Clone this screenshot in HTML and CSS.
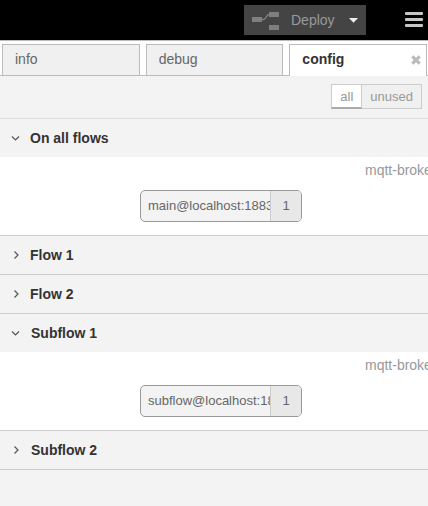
FILE: index.html
```html
<!DOCTYPE html>
<html lang="en">
<head>
<meta charset="utf-8">
<title>Config</title>
<link rel="stylesheet" href="styles.css">
</head>
<body>
<header class="header">
  <button class="deploy">
    <svg class="deploy-icon" width="28" height="18" viewBox="0 0 28 18"><path d="M10 7.5h1.500c3 0 2.500-5 5.500-5H18" fill="none" stroke="#7f7f7f" stroke-width="1.5"/><path d="M0 5h10v5H0zM17 0h10v5H17zM17 13h10v5H17z" fill="#7f7f7f"/></svg>
    <span class="deploy-label">Deploy</span>
    <svg width="9" height="5" viewBox="0 0 9 5"><path d="M0 0h9L4.500 4.800z" fill="#eee"/></svg>
  </button>
  <div class="menu"><i></i><i></i><i></i></div>
</header>
<nav class="tabs">
  <a class="tab">info</a>
  <a class="tab">debug</a>
  <a class="tab active">config<svg class="close" width="10" height="10" viewBox="0 0 10 10"><path d="M1.300 1.300l7.400 7.400M8.700 1.300l-7.400 7.400" stroke="#bbb" stroke-width="3.200"/></svg></a>
</nav>
<div class="toolbar"><a class="filter selected">all</a><a class="filter">unused</a></div>
<main>
  <section class="category">
    <h2><svg class="chevron" width="12" height="12" viewBox="0 0 12 12"><path d="M2 4.500L5.500 8 9 4.500"/></svg>On all flows</h2>
    <div class="content">
      <div class="type">mqtt-broker</div>
      <div class="node"><span class="label">main@localhost:1883</span><span class="count">1</span></div>
    </div>
  </section>
  <section class="category"><h2><svg class="chevron" width="12" height="12" viewBox="0 0 12 12"><path d="M4.500 2.500L8 6l-3.500 3.500"/></svg>Flow 1</h2></section>
  <section class="category"><h2><svg class="chevron" width="12" height="12" viewBox="0 0 12 12"><path d="M4.500 2.500L8 6l-3.500 3.500"/></svg>Flow 2</h2></section>
  <section class="category subflow">
    <h2><svg class="chevron" width="12" height="12" viewBox="0 0 12 12"><path d="M2 4.500L5.500 8 9 4.500"/></svg>Subflow 1</h2>
    <div class="content">
      <div class="type">mqtt-broker</div>
      <div class="node"><span class="label">subflow@localhost:1883</span><span class="count">1</span></div>
    </div>
  </section>
  <section class="category subflow"><h2><svg class="chevron" width="12" height="12" viewBox="0 0 12 12"><path d="M4.500 2.500L8 6l-3.500 3.500"/></svg>Subflow 2</h2></section>
</main>
</body>
</html>
```
FILE: styles.css
```css
* { box-sizing: border-box; }
body {
  margin: 0;
  height: 506px;
  overflow: hidden;
  background: #f3f3f3;
  font: 14px/20px "Liberation Sans", Arial, sans-serif;
  color: #666;
}
svg { display: block; flex: none; }
.header {
  height: 41px;
  padding: 5px 5px 5px 244px;
  background: #000;
  border-bottom: 1px solid #bbb;
  display: flex;
  justify-content: space-between;
}
.deploy {
  width: 122px;
  height: 30px;
  padding: 0 7px 0 8px;
  border: 0;
  background: #444;
  color: #999;
  font: inherit;
  display: flex;
  align-items: center;
}
.deploy-icon { margin-top: 1px; }
.deploy-label { width: 43px; margin: 0 15px 0 11px; }
.menu { width: 18px; padding-top: 7px; }
.menu i { display: block; height: 3px; margin-bottom: 3px; background: #c7c7c7; border-radius: 1px; }
.tabs {
  height: 35px;
  padding: 3px 1px 0 2px;
  background: linear-gradient(#bbb, #bbb) bottom / 100% 1px no-repeat #fff;
  display: flex;
  gap: 6px;
}
.tab {
  flex: 1;
  height: 32px;
  padding: 0 5px 0 12px;
  border: 1px solid #bbb;
  background: #f0f0f0;
  line-height: 29px;
}
.tab.active {
  display: flex;
  align-items: center;
  justify-content: space-between;
  padding-bottom: 2px;
  border-bottom: 0;
  background: #fff;
  color: #333;
  font-weight: bold;
}
.toolbar {
  height: 43px;
  padding: 8px 6px 0 0;
  border-bottom: 1px solid #ddd;
  display: flex;
  justify-content: flex-end;
}
.filter {
  height: 25px;
  padding: 0 8px;
  border: 1px solid #ccc;
  background: #f0f0f0;
  color: #999;
  font-size: 13px;
  line-height: 24px;
}
.filter + .filter { border-left: 0; }
.filter.selected { width: 31px; background: #fff; border-bottom: 2px solid #aaa; }
.category { border-bottom: 1px solid #ccc; }
h2 {
  height: 38px;
  margin: 0;
  padding-left: 10px;
  display: flex;
  align-items: center;
  gap: 8px;
  color: #333;
  font-size: 14px;
  line-height: 20px;
}
.subflow h2 { gap: 9px; }
.chevron { fill: none; stroke: #555; stroke-width: 1.2; }
.content {
  height: 78px;
  padding-top: 3px;
  background: #fff;
  overflow: hidden;
}
.type { padding-left: 365px; color: #999; white-space: nowrap; }
.node {
  width: 162px;
  height: 32px;
  margin: 10px 0 0 140px;
  border: 1px solid #999;
  border-radius: 5px;
  background: #f3f3f3;
  display: flex;
  overflow: hidden;
  font-size: 13px;
  line-height: 30px;
}
.label { width: 129px; padding-left: 7px; white-space: nowrap; overflow: hidden; }
.count { flex: 1; border-left: 1px solid #ccc; background: #e8e8e8; text-align: center; }
```
